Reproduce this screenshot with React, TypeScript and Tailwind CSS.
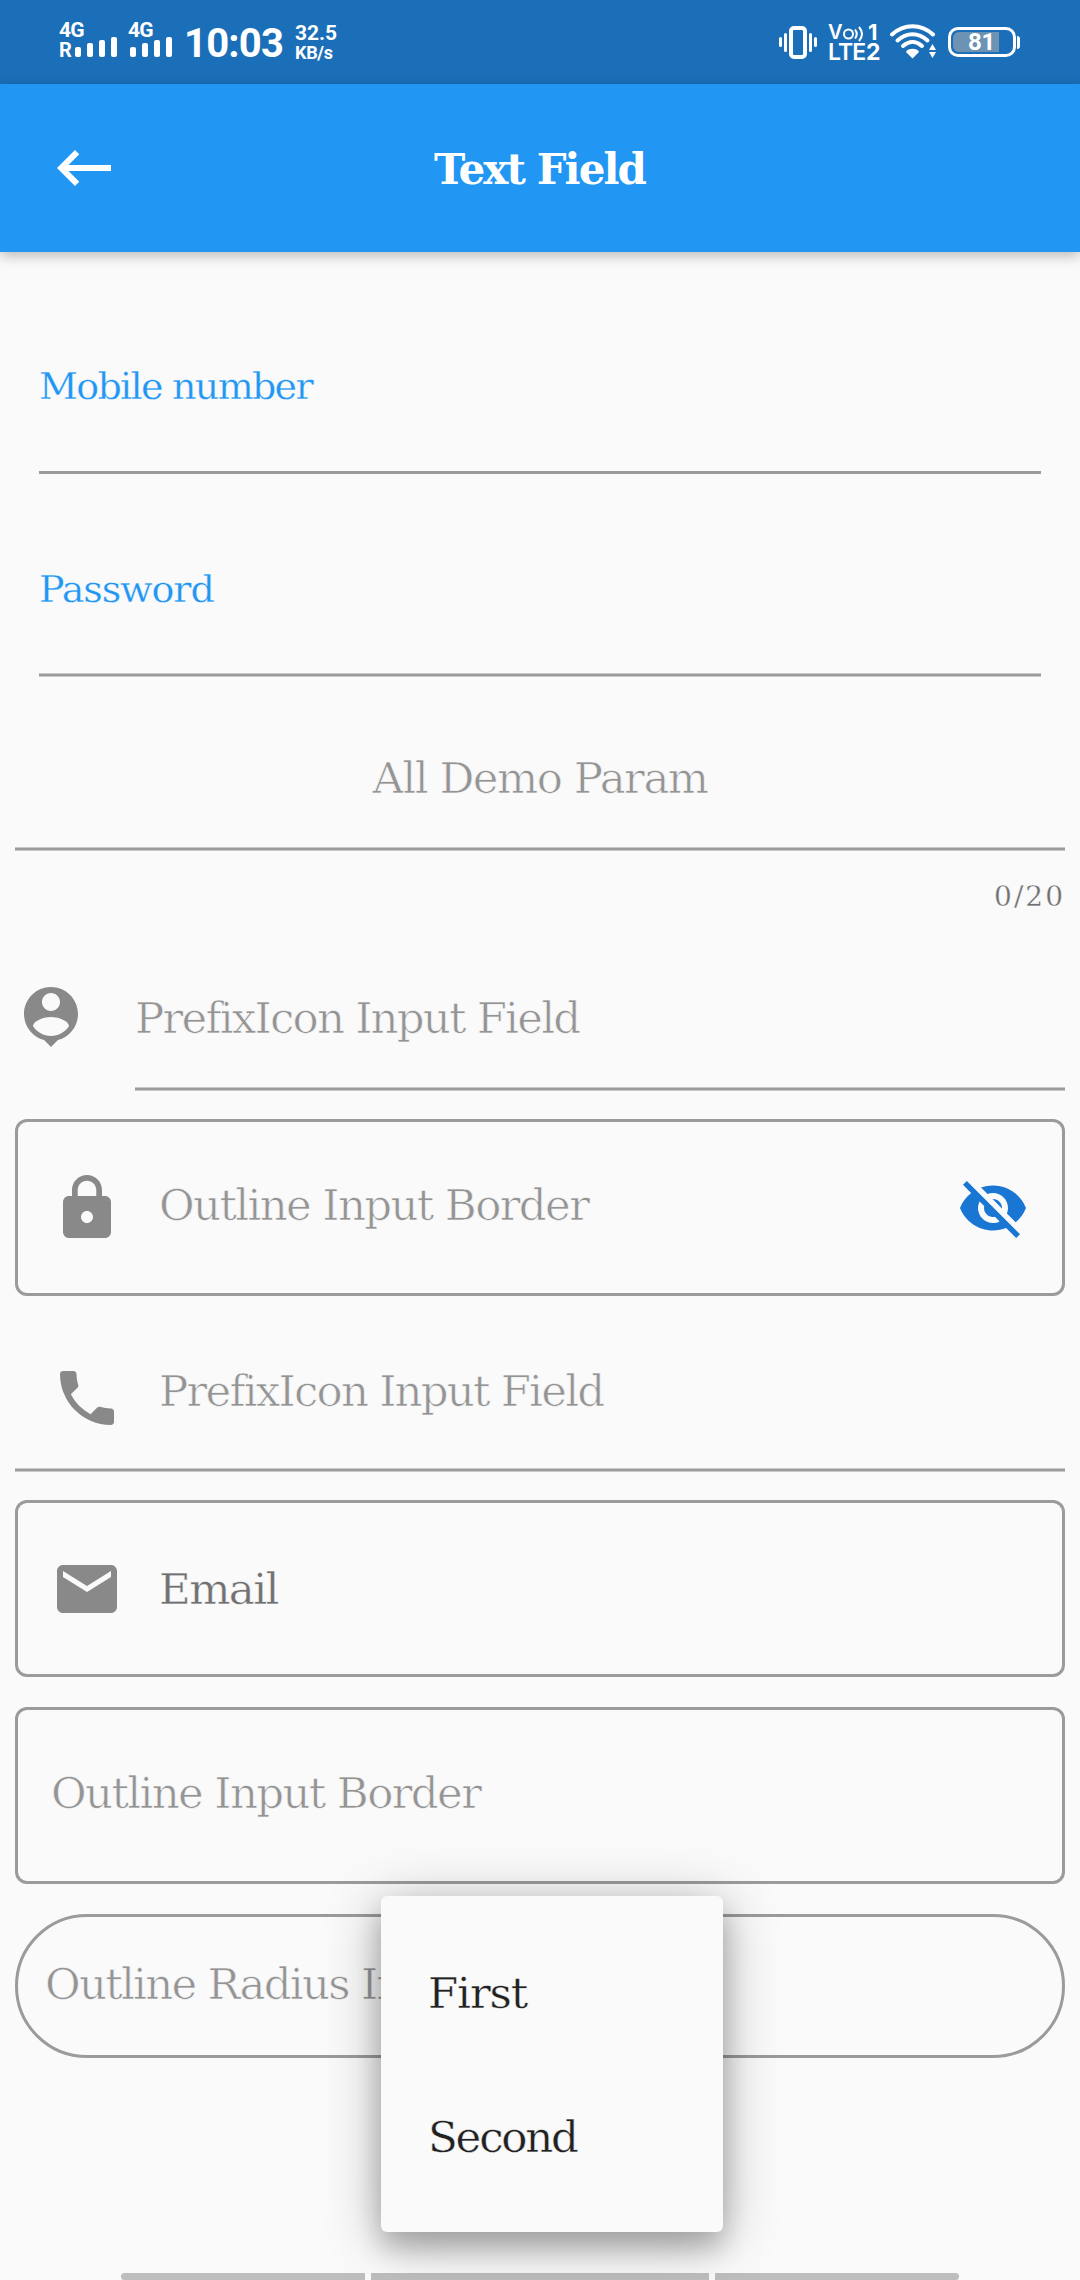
import type { ReactNode } from 'react';
import { MdEmail, MdKeyboardBackspace, MdLock, MdPhone, MdVisibilityOff } from 'react-icons/md';

const slab = "font-['DejaVu_Serif',serif] whitespace-nowrap leading-[46px]";
const hint = 'text-[43.5px] text-[#949494] [-webkit-text-stroke:0.7px_#fafafa]';

function Bars({ className }: { className: string }) {
  return (
    <div className={`flex items-end gap-[6px] ${className}`}>
      <i className="h-[10px] w-[6px] rounded-[2px] bg-white" />
      <i className="h-[14px] w-[6px] rounded-[2px] bg-white" />
      <i className="h-[17px] w-[6px] rounded-[2px] bg-white" />
      <i className="h-[20px] w-[6px] rounded-[2px] bg-white" />
    </div>
  );
}

function VibrateIcon() {
  return (
    <svg className="h-[34px] w-[38px]" viewBox="0 0 38 34" fill="none" stroke="#fff">
      <rect x="12" y="2" width="14" height="29" rx="3" strokeWidth="4" />
      <path d="M6.500 8.500v16M31.500 8.500v16" strokeWidth="3" strokeLinecap="round" />
      <path d="M1.500 12.500v7M36.500 12.500v7" strokeWidth="3" strokeLinecap="round" />
    </svg>
  );
}

function WifiIcon() {
  return (
    <svg className="h-[35px] w-[48px]" viewBox="0 0 48 35" fill="none" stroke="#fff" strokeLinecap="round">
      <path d="M2 10.500C14-0.500 31-0.500 43 10.500" strokeWidth="4" />
      <path d="M7.500 16.500C16.500 8 28.500 8 37.500 16.500" strokeWidth="4" />
      <path d="M13 22C19 16.500 26 16.500 32 22" strokeWidth="4" />
      <path d="M16 28q0-1.500 2.500-2.500 4-1.500 8 0 2.500 1 2.500 2.500L22.500 34.500z" fill="#fff" stroke="none" />
      <path d="M39 26h7L42.500 20zM39 28h7L42.500 34z" fill="#fff" stroke="none" />
    </svg>
  );
}

function StatusBar() {
  return (
    <div className="flex h-[84px] items-start bg-[#1a6fb8] font-[Roboto,sans-serif] font-bold text-white">
      <div className="ml-[59px] mt-[20px] w-[58px]">
        <div className="h-[20px] text-[21px] leading-[20px] tracking-[-0.8px]">4G</div>
        <div className="flex h-[17px] items-end">
          <span className="w-[16px] text-[20px] leading-[14px]">R</span>
          <Bars className="" />
        </div>
      </div>
      <div className="ml-[11px] mt-[20px] w-[45px]">
        <div className="h-[20px] text-[21px] leading-[20px] tracking-[-0.8px]">4G</div>
        <Bars className="h-[17px] pl-[2px]" />
      </div>
      <div className="ml-[11px] mt-[20px] w-[100px] text-[40px] leading-[48px] tracking-[-0.8px]">10:03</div>
      <div className="ml-[11px] mt-[23px] w-[60px]">
        <div className="text-[21px] leading-[21px] tracking-[-0.1px]">32.5</div>
        <div className="text-[18px] leading-[17px] tracking-[-0.3px]">KB/s</div>
      </div>
      <div className="ml-auto mr-[60px] flex items-start">
        <div className="mt-[26px]"><VibrateIcon /></div>
        <div className="ml-[11px] mt-[23px] w-[54px] font-[Inter,sans-serif]">
          <div className="flex h-[19px] items-center text-[20px] leading-[19px]">
            <span className="w-[14px] font-semibold">V</span>
            <svg className="h-[18px] w-[23px]" viewBox="0 0 23 18" fill="none" stroke="#fff" strokeWidth="2">
              <circle cx="6.500" cy="10" r="4.500" />
              <path d="M13 5.500q3.500 4.500 0 9M17 3q6 7 0 14" />
            </svg>
            <span className="ml-[3px] text-[22px]">1</span>
          </div>
          <div className="flex text-[23px] leading-[20px]">
            <span className="w-[38px] font-semibold tracking-[-0.9px]">LTE</span>
            <span>2</span>
          </div>
        </div>
        <div className="ml-[8px] mt-[24px]"><WifiIcon /></div>
        <div className="ml-[10px] mt-[27px] flex items-center">
          <div className="flex h-[30px] w-[68px] items-center rounded-[10px] border-[3px] border-white p-[2px]">
            <div className="flex h-[20px] w-[46px] items-center rounded-l-[6px] bg-[#6c93b4] pl-[15px] text-[24px] leading-[20px] tracking-[-0.2px]">81</div>
          </div>
          <i className="ml-px h-[13px] w-[3px] rounded-r-[3px] bg-white" />
        </div>
      </div>
    </div>
  );
}

function SoftLine() {
  return <div className="mt-auto h-[4px] border-y border-[#cacaca] bg-[#9b9b9b]" />;
}

function PersonPin() {
  return (
    <svg className="size-[72px] fill-[#898989]" viewBox="0 0 24 24">
      <path d="M12 2c-4.970 0-9 4.030-9 9 0 4.170 2.840 7.670 6.690 8.690L12 22l2.310-2.310C18.160 18.670 21 15.170 21 11c0-4.970-4.030-9-9-9zm0 2c1.660 0 3 1.340 3 3s-1.340 3-3 3-3-1.340-3-3 1.340-3 3-3zm0 14.300c-2.500 0-4.710-1.280-6-3.220.03-1.990 4-3.080 6-3.080 1.990 0 5.970 1.090 6 3.080-1.290 1.940-3.500 3.220-6 3.220z" />
    </svg>
  );
}

function Outlined({ className, children }: { className: string; children: ReactNode }) {
  return <div className={`flex items-start border-[3px] border-[#9b9b9b] ${className}`}>{children}</div>;
}

export default function App() {
  return (
    <div className="relative flex h-[2280px] w-[1080px] flex-col overflow-hidden bg-[#fafafa]">
      <StatusBar />
      <header className="flex h-[168px] items-center bg-[#2196f3] px-[48px] shadow-[0_4px_12px_rgba(0,0,0,0.25)]">
        <MdKeyboardBackspace className="size-[72px] text-white" />
        <h1 className={`${slab} mt-[4px] flex-1 pr-[73px] text-center text-[42px] font-bold tracking-[-1.9px] text-white`}>Text Field</h1>
      </header>

      <div className="mx-[39px] h-[222px] border-b-[3px] border-[#9b9b9b] pt-[111px]">
        <div className={`${slab} text-[38px] tracking-[-1.7px] text-[#2196f3] [-webkit-text-stroke:0.3px_#fafafa]`}>Mobile number</div>
      </div>
      <div className="mx-[39px] flex h-[203px] flex-col pt-[92px]">
        <div className={`${slab} text-[38px] tracking-[-1.1px] text-[#2196f3] [-webkit-text-stroke:0.3px_#fafafa]`}>Password</div>
        <SoftLine />
      </div>

      <div className="mx-[15px] flex flex-col">
        <div className="flex h-[174px] flex-col pt-[78px]">
          <div className={`${slab} ${hint} text-center tracking-[-1.5px]`}>All Demo Param</div>
          <SoftLine />
        </div>
        <div className="mt-[22px] text-right font-['DejaVu_Serif',serif] text-[28px] leading-[48px] tracking-[2px] text-[#6f6f6f] [-webkit-text-stroke:0.3px_#fafafa]">0/20</div>

        <div className="flex h-[170px]">
          <div className="w-[120px] pt-[60px]"><PersonPin /></div>
          <div className="flex flex-1 flex-col pt-[74px]">
            <div className={`${slab} ${hint} tracking-[-1.8px]`}>PrefixIcon Input Field</div>
            <SoftLine />
          </div>
        </div>

        <Outlined className="mt-[28px] h-[177px] rounded-[12px] px-[33px]">
          <MdLock className="mt-[50px] size-[72px] text-[#898989]" />
          <div className={`${slab} ${hint} ml-[36px] mt-[60px] tracking-[-1.65px]`}>Outline Input Border</div>
          <MdVisibilityOff className="ml-auto mt-[50px] size-[72px] text-[#1976d2]" />
        </Outlined>

        <div className="flex h-[176px] flex-col">
          <div className="flex items-start pl-[36px]">
            <MdPhone className="mt-[66px] size-[72px] text-[#898989]" />
            <div className={`${slab} ${hint} ml-[36px] mt-[72px] tracking-[-1.8px]`}>PrefixIcon Input Field</div>
          </div>
          <SoftLine />
        </div>

        <Outlined className="mt-[28px] h-[177px] rounded-[12px] px-[33px]">
          <MdEmail className="mt-[50px] size-[72px] text-[#898989]" />
          <div className={`${slab} ml-[36px] mt-[63px] text-[43.5px] tracking-[-1.6px] text-[#717171] [-webkit-text-stroke:0.4px_#fafafa]`}>Email</div>
        </Outlined>

        <Outlined className="mt-[30px] h-[177px] rounded-[12px] px-[33px]">
          <div className={`${slab} ${hint} mt-[60px] tracking-[-1.65px]`}>Outline Input Border</div>
        </Outlined>

        <Outlined className="mt-[30px] h-[144px] rounded-[72px] px-[27px]">
          <div className={`${slab} ${hint} mt-[44px] tracking-[-1.75px]`}>Outline Radius Input Border</div>
        </Outlined>
      </div>

      <div className="mx-[121px] mt-auto flex h-[7px] gap-[6px]">
        <i className="w-[244px] rounded-l-[4px] bg-[#bebebe]" />
        <i className="w-[338px] bg-[#bebebe]" />
        <i className="w-[244px] rounded-r-[4px] bg-[#bebebe]" />
      </div>

      <div className="absolute left-[381px] top-[1896px] h-[336px] w-[342px] rounded-[6px] bg-[#fafafa] pl-[47px] pt-[25px] shadow-[0_16px_26px_rgba(0,0,0,0.2),0_8px_56px_rgba(0,0,0,0.3)]">
        <div className={`${slab} flex h-[144px] items-center text-[43.5px] tracking-[-1.1px] text-[#212121] [-webkit-text-stroke:0.4px_#fafafa]`}>First</div>
        <div className={`${slab} flex h-[144px] items-center text-[43.5px] tracking-[-2.2px] text-[#212121] [-webkit-text-stroke:0.4px_#fafafa]`}>Second</div>
      </div>
    </div>
  );
}
